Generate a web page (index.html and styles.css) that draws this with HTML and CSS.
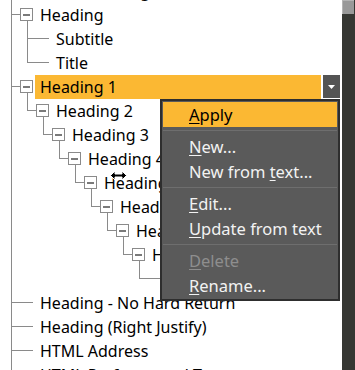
FILE: index.html
```html
<!DOCTYPE html>
<html lang="en">
<head>
    <meta charset="UTF-8">
    <meta name="viewport" content="width=device-width, initial-scale=1.0">
    <title>Paragraph Styles</title>
    <link rel="stylesheet" href="styles.css">
</head>
<body>
    <div class="window">
        <div class="tree">
            <div class="rows">
                <div class="row"><span class="g tee"></span><span class="node leaf"></span><span class="label">Index Heading</span></div>
                <div class="row"><span class="g tee"></span><span class="node open"><i></i></span><span class="label">Heading</span></div>
                <div class="row"><span class="g pipe"></span><span class="g tee"></span><span class="node leaf"></span><span class="label">Subtitle</span></div>
                <div class="row"><span class="g pipe"></span><span class="g elbow"></span><span class="node leaf"></span><span class="label">Title</span></div>
                <div class="row current"><span class="g tee"></span><span class="node open"><i></i></span><span class="label">Heading 1</span>
                    <span class="drop"><svg width="7" height="4" viewBox="0 0 7 4"><polygon points="0,0 7,0 3.5,4" fill="#fff"/></svg></span>
                </div>
                <div class="row"><span class="g pipe"></span><span class="g elbow"></span><span class="node open"><i></i></span><span class="label">Heading 2</span></div>
                <div class="row"><span class="g pipe"></span><span class="g"></span><span class="g elbow"></span><span class="node open"><i></i></span><span class="label">Heading 3</span></div>
                <div class="row"><span class="g pipe"></span><span class="g"></span><span class="g"></span><span class="g elbow"></span><span class="node open"><i></i></span><span class="label">Heading 4</span></div>
                <div class="row"><span class="g pipe"></span><span class="g"></span><span class="g"></span><span class="g"></span><span class="g elbow"></span><span class="node open"><i></i></span><span class="label">Heading 5</span></div>
                <div class="row"><span class="g pipe"></span><span class="g"></span><span class="g"></span><span class="g"></span><span class="g"></span><span class="g elbow"></span><span class="node open"><i></i></span><span class="label">Heading 6</span></div>
                <div class="row"><span class="g pipe"></span><span class="g"></span><span class="g"></span><span class="g"></span><span class="g"></span><span class="g"></span><span class="g elbow"></span><span class="node open"><i></i></span><span class="label">Heading 7</span></div>
                <div class="row"><span class="g pipe"></span><span class="g"></span><span class="g"></span><span class="g"></span><span class="g"></span><span class="g"></span><span class="g"></span><span class="g elbow"></span><span class="node open"><i></i></span><span class="label">Heading 8</span></div>
                <div class="row"><span class="g pipe"></span><span class="g"></span><span class="g"></span><span class="g"></span><span class="g"></span><span class="g"></span><span class="g"></span><span class="g"></span><span class="g elbow"></span><span class="node leaf"></span><span class="label">Heading 9</span></div>
                <div class="row"><span class="g tee"></span><span class="node leaf"></span><span class="label">Heading - No Hard Return</span></div>
                <div class="row"><span class="g tee"></span><span class="node leaf"></span><span class="label">Heading (Right Justify)</span></div>
                <div class="row"><span class="g tee"></span><span class="node leaf"></span><span class="label">HTML Address</span></div>
                <div class="row"><span class="g tee"></span><span class="node leaf"></span><span class="label">HTML Preformatted Text</span></div>
            </div>
        </div>

        <div class="scrollbar"><div class="thumb"></div></div>

        <!-- context menu for the selected style -->
        <div class="menu">
            <div class="item active"><u>A</u>pply</div>
            <div class="sep"></div>
            <div class="item"><u>N</u>ew...</div>
            <div class="item">New from <u>t</u>ext...</div>
            <div class="sep"></div>
            <div class="item"><u>E</u>dit...</div>
            <div class="item"><u>U</u>pdate from text</div>
            <div class="sep"></div>
            <div class="item disabled"><u>D</u>elete</div>
            <div class="item"><u>R</u>ename...</div>
        </div>

        <svg class="cursor" width="17" height="11" viewBox="0 0 17 11">
            <path d="M0.5 5.5 L5 1 L5 4 L12 4 L12 1 L16.5 5.5 L12 10 L12 7 L5 7 L5 10 Z" fill="#000" stroke="#fff" stroke-width="1"/>
        </svg>
    </div>
</body>
</html>
```

FILE: styles.css
```css
body {
    margin: 0;
    font-family: "Noto Sans", "DejaVu Sans", sans-serif;
    font-size: 16px;
    color: #000;
    background: #fff;
}

.window {
    position: relative;
    display: flex;
    height: 370px;
    overflow: hidden;
}

.tree {
    flex: 1;
    padding-left: 4px;
    overflow: hidden;
}

/* list is scrolled a little */
.rows {
    margin-top: -21px;
}

.row {
    display: flex;
    align-items: flex-start;
    height: 24px;
}

.g {
    flex: none;
    width: 16px;
    height: 24px;
}

.g.pipe {
    background: linear-gradient(#8a8a8a, #8a8a8a) 7px 0 / 1px 100% no-repeat;
}

.g.tee {
    background:
        linear-gradient(#8a8a8a, #8a8a8a) 7px 0 / 1px 100% no-repeat,
        linear-gradient(#8a8a8a, #8a8a8a) 7px 11px / 9px 1px no-repeat;
}

.g.elbow {
    background:
        linear-gradient(#8a8a8a, #8a8a8a) 7px 0 / 1px 12px no-repeat,
        linear-gradient(#8a8a8a, #8a8a8a) 7px 11px / 9px 1px no-repeat;
}

.node {
    flex: none;
    width: 13px;
    height: 24px;
}

.node.leaf {
    background: linear-gradient(#8a8a8a, #8a8a8a) 0 11px / 13px 1px no-repeat;
}

.node.open {
    background: linear-gradient(#8a8a8a, #8a8a8a) 7px 12px / 1px 12px no-repeat;
}

.node i {
    display: block;
    box-sizing: border-box;
    width: 13px;
    height: 13px;
    margin-top: 5px;
    border: 1px solid #8a8a8a;
    background: #fff linear-gradient(#7a7a7a, #7a7a7a) center / 7px 2px no-repeat;
}

.label {
    margin-left: 2px;
    padding: 0 5px;
    line-height: 24px;
    white-space: nowrap;
}

.row.current .label {
    flex: 1;
    background: #fbb833;
}

.drop {
    flex: none;
    display: flex;
    align-items: center;
    justify-content: center;
    width: 17px;
    height: 23px;
    margin: 0 2px;
    background: #545454;
}

.scrollbar {
    flex: none;
    width: 13px;
    background: #363733;
}

.thumb {
    box-sizing: border-box;
    width: 12px;
    height: 14px;
    background: #999;
    border-top: 1px solid #b4b4b4;
    border-left: 1px solid #b4b4b4;
}

.menu {
    position: absolute;
    left: 160px;
    top: 99px;
    width: 180px;
    box-sizing: border-box;
    padding: 1px;
    background: #5a5a5a;
    border: 2px solid #2e2e2e;
    color: #f2f2f2;
    font-size: 16.5px;
}

.item {
    height: 25px;
    line-height: 25px;
    padding-left: 26px;
    white-space: nowrap;
}

.item u {
    text-underline-offset: 2px;
}

.item.active {
    background: #fbb833;
    color: #000;
}

.item.disabled {
    color: #8e8e8e;
}

.sep {
    height: 1px;
    margin: 3px 0;
    background: #6e6e6e;
}

.cursor {
    position: absolute;
    left: 110px;
    top: 170px;
}
```
